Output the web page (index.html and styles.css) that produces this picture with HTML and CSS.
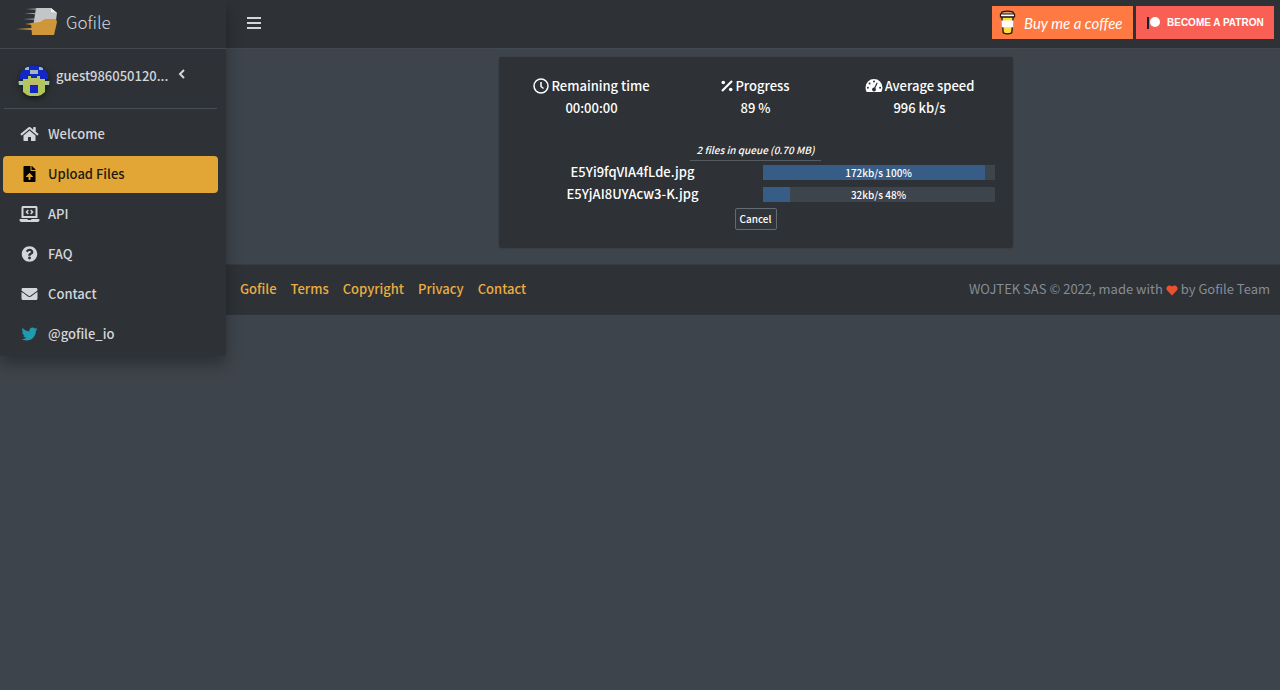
FILE: index.html
```html
<!DOCTYPE html>
<html lang="en">
<head>
<meta charset="utf-8">
<meta name="viewport" content="width=device-width, initial-scale=1">
<title>Gofile - Upload Files</title>
<link rel="stylesheet" href="styles.css">
</head>
<body>
<div class="app">
  <aside class="sidebar">
    <a class="brand" href="#">
      <svg class="brand-logo" viewBox="0 0 42 30" aria-hidden="true">
        <path d="M20 1h15l6 5-2 14H17z" fill="#c3c5c7"/>
        <path d="M35 1l6 5-6-1z" fill="#eceeef"/>
        <path d="M10 2l11-.6v1.400zM8 6.500l12-.6v1.400zM7 12l12-.6v1.400z" fill="#a9acae"/>
        <path d="M15 16l9-1 5-3h11l1 3-3 13H16z" fill="#d0963a"/>
        <path d="M0 22l16-1v2zM9 17l7-1v2z" fill="#d0963a"/>
      </svg>
      <span>Gofile</span>
    </a>
    <div class="user">
      <svg class="avatar" viewBox="0 0 32 32" aria-hidden="true">
        <defs><clipPath id="disc"><circle cx="16" cy="16" r="15.500"/></clipPath></defs>
        <g clip-path="url(#disc)">
          <path fill="#1327c4" d="M6 1h20v4h4v9H2V5h4z"/>
          <path fill="#9fb7c0" d="M7 2h4v3H7zM21 2h4v3h-4zM12 5h8v4h-8z"/>
          <path fill="#b3c65b" d="M5 14h5v-3h3v2h6v-2h3v3h5v17H5z"/>
          <path fill="#a0c5b0" d="M0 16h5v4H0zM27 16h5v4h-5z"/>
          <path fill="#c7b473" d="M12 17h8v3h-8z"/>
          <path fill="#1327c4" d="M12 20h8v8h-8z"/>
        </g>
      </svg>
      <a class="user-name" href="#">guest986050120...</a>
      <svg class="chevron" viewBox="0 0 8 10" aria-hidden="true"><path d="M6 1L2 5l4 4" fill="none" stroke="currentColor" stroke-width="2"/></svg>
    </div>
    <nav class="menu" aria-label="Main">
      <a href="#"><svg class="icon" viewBox="0 0 576 512"><path d="M280.37 148.26L96 300.11V464a16 16 0 0 0 16 16l112.06-.29a16 16 0 0 0 15.92-16V368a16 16 0 0 1 16-16h64a16 16 0 0 1 16 16v95.64a16 16 0 0 0 16 16.05L464 480a16 16 0 0 0 16-16V300L295.67 148.26a12.19 12.19 0 0 0-15.3 0zM571.6 251.47L488 182.56V44.05a12 12 0 0 0-12-12h-56a12 12 0 0 0-12 12v72.61L318.47 43a48 48 0 0 0-61 0L4.34 251.47a12 12 0 0 0-1.6 16.9l25.5 31A12 12 0 0 0 45.15 301l235.22-193.74a12.19 12.19 0 0 1 15.3 0L530.9 301a12 12 0 0 0 16.9-1.6l25.5-31a12 12 0 0 0-1.7-16.93z"/></svg>Welcome</a>
      <a class="active" href="#" aria-current="page"><svg class="icon" viewBox="0 0 384 512"><path d="M224 136V0H24C10.7 0 0 10.7 0 24v464c0 13.3 10.7 24 24 24h336c13.3 0 24-10.7 24-24V160H248c-13.2 0-24-10.8-24-24zm65.18 216.01H224v80c0 8.84-7.16 16-16 16h-32c-8.84 0-16-7.16-16-16v-80H94.82c-14.28 0-21.41-17.29-11.27-27.36l96.42-95.7c6.65-6.61 17.39-6.61 24.04 0l96.42 95.7c10.15 10.07 3.03 27.36-11.25 27.36zM377 105L279.1 7c-4.5-4.5-10.6-7-17-7H256v128h128v-6.1c0-6.3-2.5-12.4-7-16.9z"/></svg>Upload Files</a>
      <a href="#"><svg class="icon" viewBox="0 0 640 512"><path d="M255.03 261.65c6.25 6.25 16.38 6.25 22.63 0l11.31-11.31c6.25-6.25 6.25-16.38 0-22.63L253.25 192l35.71-35.72c6.25-6.25 6.25-16.38 0-22.63l-11.31-11.31c-6.25-6.25-16.38-6.25-22.63 0l-58.34 58.34c-6.25 6.25-6.25 16.38 0 22.63l58.35 58.34zm96.01-11.3l11.31 11.31c6.25 6.25 16.38 6.25 22.63 0l58.34-58.34c6.25-6.25 6.25-16.38 0-22.63l-58.34-58.34c-6.25-6.25-16.38-6.25-22.63 0l-11.31 11.31c-6.25 6.25-6.25 16.38 0 22.63L386.75 192l-35.71 35.72c-6.25 6.25-6.25 16.38 0 22.63zM624 416H381.54c-.74 19.81-14.71 32-32.74 32H288c-18.69 0-33.02-17.47-32.77-32H16c-8.8 0-16 7.2-16 16v16c0 35.2 28.8 64 64 64h512c35.2 0 64-28.8 64-64v-16c0-8.8-7.2-16-16-16zM576 48c0-26.4-21.6-48-48-48H112C85.6 0 64 21.6 64 48v336h512V48zm-64 272H128V64h384v256z"/></svg>API</a>
      <a href="#"><svg class="icon" viewBox="0 0 512 512"><path d="M504 256c0 136.997-111.043 248-248 248S8 392.997 8 256C8 119.083 119.043 8 256 8s248 111.083 248 248zM262.655 90c-54.497 0-89.255 22.957-116.549 63.758-3.536 5.286-2.353 12.415 2.715 16.258l34.699 26.31c5.205 3.947 12.621 3.008 16.665-2.122 17.864-22.658 30.113-35.797 57.303-35.797 20.429 0 45.698 13.148 45.698 32.958 0 14.976-12.363 22.667-32.534 33.976C247.128 238.528 216 254.941 216 296v4c0 6.627 5.373 12 12 12h56c6.627 0 12-5.373 12-12v-1.333c0-28.462 83.186-29.647 83.186-106.667 0-58.002-60.165-102-116.531-102zM256 338c-25.365 0-46 20.635-46 46 0 25.364 20.635 46 46 46s46-20.636 46-46c0-25.365-20.635-46-46-46z"/></svg>FAQ</a>
      <a href="#"><svg class="icon" viewBox="0 0 512 512"><path d="M502.3 190.8c3.9-3.1 9.7-.2 9.7 4.7V400c0 26.5-21.5 48-48 48H48c-26.5 0-48-21.5-48-48V195.6c0-5 5.7-7.8 9.7-4.7 22.4 17.4 52.1 39.5 154.1 113.6 21.1 15.4 56.7 47.8 92.2 47.6 35.7.3 72-32.8 92.3-47.6 102-74.1 131.6-96.3 154-113.7zM256 320c23.2.4 56.6-29.2 73.4-41.4 132.7-96.3 142.8-104.7 173.4-128.7 5.8-4.5 9.2-11.5 9.2-18.9v-19c0-26.5-21.5-48-48-48H48c-26.5 0-48 21.5-48 48v19c0 7.4 3.4 14.3 9.2 18.9 30.6 23.9 40.7 32.4 173.4 128.7 16.8 12.2 50.2 41.8 73.4 41.4z"/></svg>Contact</a>
      <a href="#"><svg class="icon twitter" viewBox="0 0 512 512"><path d="M459.37 151.716c.325 4.548.325 9.097.325 13.645 0 138.72-105.583 298.558-298.558 298.558-59.452 0-114.68-17.219-161.137-47.106 8.447.974 16.568 1.299 25.34 1.299 49.055 0 94.213-16.568 130.274-44.832-46.132-.975-84.792-31.188-98.112-72.772 6.498.974 12.995 1.624 19.818 1.624 9.421 0 18.843-1.3 27.614-3.573-48.081-9.747-84.143-51.98-84.143-102.985v-1.299c13.969 7.797 30.214 12.67 47.431 13.319-28.264-18.843-46.781-51.005-46.781-87.391 0-19.492 5.197-37.36 14.294-52.954 51.655 63.675 129.3 105.258 216.365 109.807-1.624-7.797-2.599-15.918-2.599-24.04 0-57.828 46.782-104.934 104.934-104.934 30.213 0 57.502 12.67 76.67 33.137 23.715-4.548 46.456-13.32 66.599-25.34-7.798 24.366-24.366 44.833-46.132 57.827 21.117-2.273 41.584-8.122 60.426-16.243-14.292 20.791-32.161 39.308-52.628 54.253z"/></svg>@gofile_io</a>
    </nav>
  </aside>

  <div class="page">
    <header class="topbar">
      <button class="toggle" type="button" aria-label="Toggle menu">
        <svg viewBox="0 0 14 12" aria-hidden="true"><path d="M0 1h14M0 6h14M0 11h14" stroke="currentColor" stroke-width="2"/></svg>
      </button>
      <div class="support">
        <a class="coffee" href="#">
          <svg viewBox="0 0 18 26" aria-hidden="true">
            <path d="M3 7h12l-1.500 17q-4.500 2-9 0z" fill="#ffdd3c" stroke="#1d1712" stroke-width="1.4"/>
            <path d="M2.500 11h13l-.6 7H3.100z" fill="#fff"/>
            <path d="M3 2q6-2 12 0l1 3H2z" fill="#d9a273" stroke="#1d1712" stroke-width="1.3"/>
            <path d="M1.500 4h15v3h-15z" fill="#fff" stroke="#1d1712" stroke-width="1.2"/>
          </svg>
          <span>Buy me a coffee</span>
        </a>
        <a class="patron" href="#">
          <svg viewBox="0 0 14 13" aria-hidden="true"><path d="M0 1h2v12H0z" fill="#16232f"/><circle cx="8" cy="6" r="5" fill="#fff"/></svg>
          <span>BECOME A PATRON</span>
        </a>
      </div>
    </header>

    <main class="content">
      <section class="card" aria-label="Upload progress">
        <div class="stats">
          <div>
            <div class="stat-title"><svg viewBox="0 0 16 16" aria-hidden="true"><g fill="none" stroke="currentColor" stroke-width="1.5"><circle cx="8" cy="8" r="7"/><path d="M8 4v4.5l2.5 2"/></g></svg>Remaining time</div>
            <div>00:00:00</div>
          </div>
          <div>
            <div class="stat-title"><svg class="percent" viewBox="0 0 12 12" aria-hidden="true"><path d="M1 11L11 1" stroke="currentColor" stroke-width="2.2"/><circle cx="2.3" cy="2.5" r="1.8" fill="currentColor"/><circle cx="9.7" cy="9.5" r="1.8" fill="currentColor"/></svg>Progress</div>
            <div>89 %</div>
          </div>
          <div>
            <div class="stat-title"><svg viewBox="0 0 18 16" aria-hidden="true"><path d="M9 1a8.500 8.500 0 0 0-8.500 8.500q0 2.500 1.200 4.500h14.600q1.200-2 1.200-4.500A8.500 8.500 0 0 0 9 1z" fill="currentColor"/><g fill="#2e3236"><circle cx="9" cy="3.500" r="1"/><circle cx="4.600" cy="5.400" r="1"/><circle cx="2.900" cy="9.800" r="1"/><circle cx="15.100" cy="9.800" r="1"/><circle cx="9" cy="11.500" r="1.900"/></g><path d="M9 11.500l3.200-6.800" stroke="#2e3236" stroke-width="1.200"/></svg>Average speed</div>
            <div>996 kb/s</div>
          </div>
        </div>
        <p class="queue">2 files in queue (0.70 MB)</p>
        <div class="file">
          <span class="file-name">E5Yi9fqVIA4fLde.jpg</span>
          <div class="bar" role="progressbar" aria-label="E5Yi9fqVIA4fLde.jpg" aria-valuenow="100">
            <div class="fill" style="width:96%"></div><span>172kb/s 100%</span>
          </div>
        </div>
        <div class="file">
          <span class="file-name">E5YjAI8UYAcw3-K.jpg</span>
          <div class="bar" role="progressbar" aria-label="E5YjAI8UYAcw3-K.jpg" aria-valuenow="48">
            <div class="fill" style="width:12%"></div><span>32kb/s 48%</span>
          </div>
        </div>
        <button class="cancel" type="button">Cancel</button>
      </section>
    </main>

    <footer class="footer">
      <nav class="links" aria-label="Footer">
        <a href="#">Gofile</a><a href="#">Terms</a><a href="#">Copyright</a><a href="#">Privacy</a><a href="#">Contact</a>
      </nav>
      <div class="credit">WOJTEK SAS © 2022, made with <svg viewBox="0 0 12 12" role="img" aria-label="love"><path d="M6 11.500L1 6.300C-1 3 2.800-.5 6 2.600 9.200-.5 13 3 11 6.300z" fill="#e9512f"/></svg> by Gofile Team</div>
    </footer>
  </div>
</div>
</body>
</html>
```
FILE: styles.css
```css
* { box-sizing: border-box; }

body {
  margin: 0;
  background: #3e444b;
  color: #fff;
  font: 500 13px/22px "Noto Sans CJK SC", "Noto Sans", sans-serif;
}

a { color: inherit; text-decoration: none; }

button { font: inherit; color: inherit; cursor: pointer; }

.app {
  display: flex;
  align-items: flex-start;
  min-height: 100vh;
}

.sidebar {
  flex: 0 0 226px;
  padding-bottom: 3px;
  background: #2e3236;
  color: #d3d6da;
  box-shadow: 0 8px 14px rgba(0, 0, 0, .3);
  z-index: 1;
}

.brand {
  display: flex;
  align-items: center;
  gap: 8px;
  height: 49px;
  padding: 0 16px 4px;
  border-bottom: 1px solid #43494f;
  font-size: 17px;
  font-weight: 300;
}

.brand-logo { width: 42px; height: 30px; }

.user {
  display: flex;
  align-items: flex-start;
  height: 60px;
  margin: 0 9px 7px 4px;
  padding: 16px 14px 0;
  border-bottom: 1px solid #484e55;
}

.avatar { width: 32px; height: 32px; margin-right: 6px; filter: drop-shadow(0 2px 3px #0008); }

.user-name {
  min-width: 115px;
  white-space: nowrap;
}

.chevron { width: 8px; height: 10px; margin: 4px 0 0 7px; }

.menu {
  display: grid;
  gap: 3px;
  padding: 0 8px 0 3px;
}

.menu a {
  display: flex;
  align-items: center;
  gap: 8px;
  height: 37px;
  padding: 0 16px 2px;
  border-radius: 4px;
}

.menu .active { background: #e2a636; color: #22190f; }
.active .icon { color: #000; }

.icon { width: 21px; height: 16px; fill: currentColor; }

.twitter { color: #1f9bb0; }

.page { flex: 1; min-width: 0; }

.topbar {
  display: flex;
  align-items: center;
  justify-content: space-between;
  height: 49px;
  padding: 0 6px 3px 21px;
  background: #2e3236;
  border-bottom: 1px solid #43494f;
}

.toggle { padding: 0; border: 0; background: none; color: #d3d6da; }
.toggle svg { display: block; width: 14px; height: 12px; }

.support { display: flex; gap: 3px; }

.support a { display: flex; align-items: center; height: 33px; white-space: nowrap; }

.coffee {
  width: 141px;
  gap: 8px;
  padding-left: 7px;
  background: #ff7a42;
  font: italic 15px/22px Lato, cursive;
}

.coffee svg { width: 17px; height: 25px; }

.patron {
  width: 138px;
  gap: 6px;
  padding-left: 11px;
  background: #f95f55;
  font: bold 10px/22px "Liberation Sans", Arial, sans-serif;
}

.patron svg { width: 14px; height: 13px; }

.content { padding: 8px 0 16px 5px; }

.card {
  width: 49%;
  margin: 0 auto;
  padding: 18px 11px;
  border-radius: 3px;
  background: #2e3236;
  box-shadow: 0 0 2px #0004;
  text-align: center;
}

.stats { display: grid; grid-template-columns: repeat(3, 1fr); }

.stat-title {
  display: flex;
  align-items: center;
  justify-content: center;
  gap: 2px;
}

.stat-title svg { height: 16px; }
.stat-title .percent { height: 12px; }

.queue {
  width: fit-content;
  margin: 20px auto 0;
  padding: 0 6px;
  border-bottom: 1px solid #565b60;
  font-size: 10px;
  line-height: 21px;
  font-style: italic;
}

.file {
  display: grid;
  grid-template-columns: 1fr 1fr;
  align-items: center;
}

.bar {
  display: grid;
  height: 15px;
  margin: 0 7px;
  background: #3e444b;
  font-size: 10px;
  line-height: 15px;
}

.bar > * { grid-area: 1 / 1; }
.bar span { z-index: 1; }

.fill { background: #375d86; }

.cancel {
  display: block;
  margin: 3px auto 0;
  padding: 0 4px;
  border: 1px solid #646a71;
  border-radius: 2px;
  background: #30353b;
  font-size: 10px;
  line-height: 20px;
}

.footer {
  display: flex;
  align-items: center;
  justify-content: space-between;
  min-height: 51px;
  padding: 0 10px 2px 14px;
  background: #2e3236;
  border-top: 1px solid #363b40;
}

.links { display: flex; gap: 14px; color: #e9ad42; }

.credit { color: #858d95; font-weight: 400; }
.credit svg { width: 12px; height: 12px; vertical-align: -2px; }
```
